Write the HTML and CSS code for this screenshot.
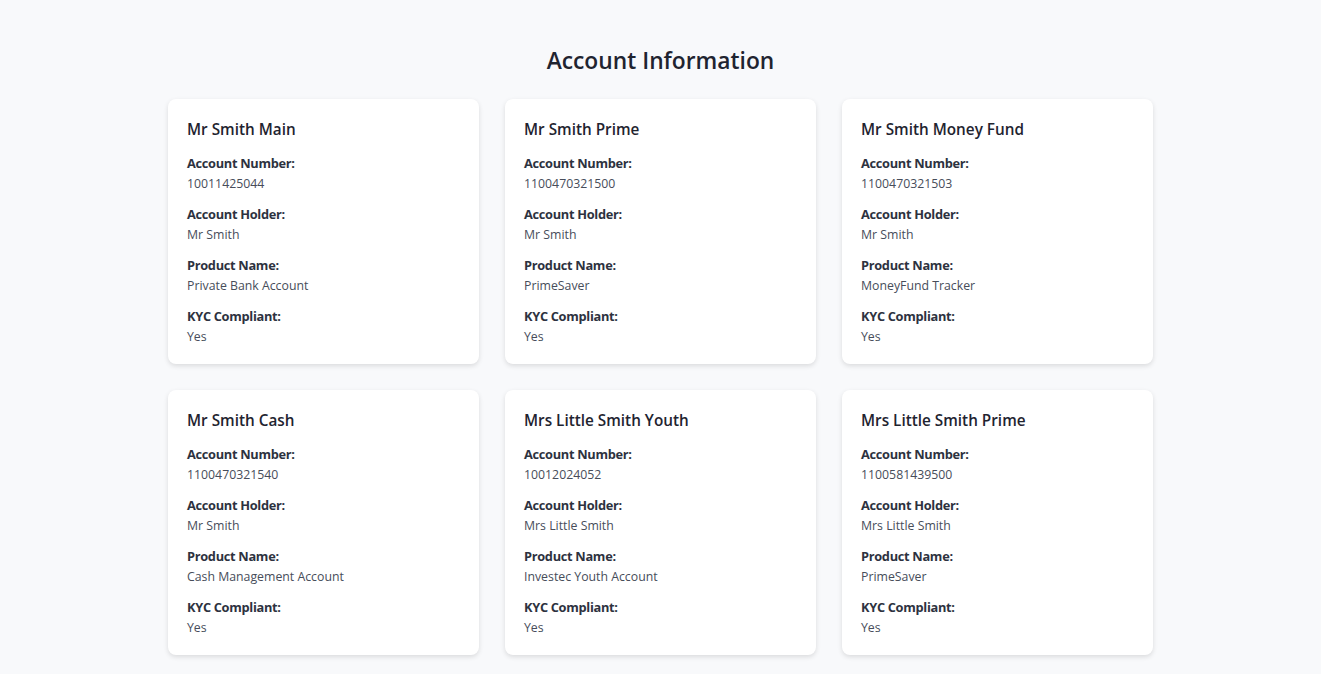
FILE: index.html
```html
<!DOCTYPE html>
<html lang="en">
<head>
<meta charset="utf-8">
<title>Account Information</title>
<link rel="stylesheet" href="styles.css">
</head>
<body>
<main class="page">
  <h1 class="page-title">Account Information</h1>
  <div class="grid">
    <section class="card">
      <h3 class="card-title">Mr Smith Main</h3>
      <div class="field"><div class="label">Account Number:</div><div class="value">10011425044</div></div>
      <div class="field"><div class="label">Account Holder:</div><div class="value">Mr Smith</div></div>
      <div class="field"><div class="label">Product Name:</div><div class="value">Private Bank Account</div></div>
      <div class="field"><div class="label">KYC Compliant:</div><div class="value">Yes</div></div>
    </section>
    <section class="card">
      <h3 class="card-title">Mr Smith Prime</h3>
      <div class="field"><div class="label">Account Number:</div><div class="value">1100470321500</div></div>
      <div class="field"><div class="label">Account Holder:</div><div class="value">Mr Smith</div></div>
      <div class="field"><div class="label">Product Name:</div><div class="value">PrimeSaver</div></div>
      <div class="field"><div class="label">KYC Compliant:</div><div class="value">Yes</div></div>
    </section>
    <section class="card">
      <h3 class="card-title">Mr Smith Money Fund</h3>
      <div class="field"><div class="label">Account Number:</div><div class="value">1100470321503</div></div>
      <div class="field"><div class="label">Account Holder:</div><div class="value">Mr Smith</div></div>
      <div class="field"><div class="label">Product Name:</div><div class="value">MoneyFund Tracker</div></div>
      <div class="field"><div class="label">KYC Compliant:</div><div class="value">Yes</div></div>
    </section>
    <section class="card">
      <h3 class="card-title">Mr Smith Cash</h3>
      <div class="field"><div class="label">Account Number:</div><div class="value">1100470321540</div></div>
      <div class="field"><div class="label">Account Holder:</div><div class="value">Mr Smith</div></div>
      <div class="field"><div class="label">Product Name:</div><div class="value">Cash Management Account</div></div>
      <div class="field"><div class="label">KYC Compliant:</div><div class="value">Yes</div></div>
    </section>
    <section class="card">
      <h3 class="card-title">Mrs Little Smith Youth</h3>
      <div class="field"><div class="label">Account Number:</div><div class="value">10012024052</div></div>
      <div class="field"><div class="label">Account Holder:</div><div class="value">Mrs Little Smith</div></div>
      <div class="field"><div class="label">Product Name:</div><div class="value">Investec Youth Account</div></div>
      <div class="field"><div class="label">KYC Compliant:</div><div class="value">Yes</div></div>
    </section>
    <section class="card">
      <h3 class="card-title">Mrs Little Smith Prime</h3>
      <div class="field"><div class="label">Account Number:</div><div class="value">1100581439500</div></div>
      <div class="field"><div class="label">Account Holder:</div><div class="value">Mrs Little Smith</div></div>
      <div class="field"><div class="label">Product Name:</div><div class="value">PrimeSaver</div></div>
      <div class="field"><div class="label">KYC Compliant:</div><div class="value">Yes</div></div>
    </section>
  </div>
</main>
</body>
</html>
```
FILE: styles.css
```css
* { box-sizing: border-box; }
html, body { margin: 0; padding: 0; }
body {
  background: #f8f9fb;
  font-family: "Open Sans", "Noto Sans", sans-serif;
  color: #212529;
}
.page {
  padding: 46px 0 20px;
}
.page-title {
  margin: 0 0 23px;
  text-align: center;
  font-size: 22.8px;
  line-height: 30px;
  font-weight: 600;
  color: #1f2430;
}
.grid {
  width: 985px;
  margin: 0 auto;
  display: grid;
  grid-template-columns: repeat(3, 311px);
  gap: 26px;
}
.card {
  background: #fff;
  border-radius: 8px;
  box-shadow: 0 2px 5px rgba(0, 0, 0, 0.12);
  padding: 20px 19px 17px;
}
.card-title {
  margin: 0 0 15px;
  font-size: 15.3px;
  line-height: 20px;
  font-weight: 600;
  color: #1f2430;
}
.field { margin-bottom: 11px; }
.field:last-child { margin-bottom: 0; }
.label {
  font-size: 12.8px;
  line-height: 19px;
  font-weight: 700;
  color: #2d3240;
  letter-spacing: -0.3px;
}
.value {
  font-size: 12.3px;
  line-height: 21px;
  color: #474d5a;
}
```
